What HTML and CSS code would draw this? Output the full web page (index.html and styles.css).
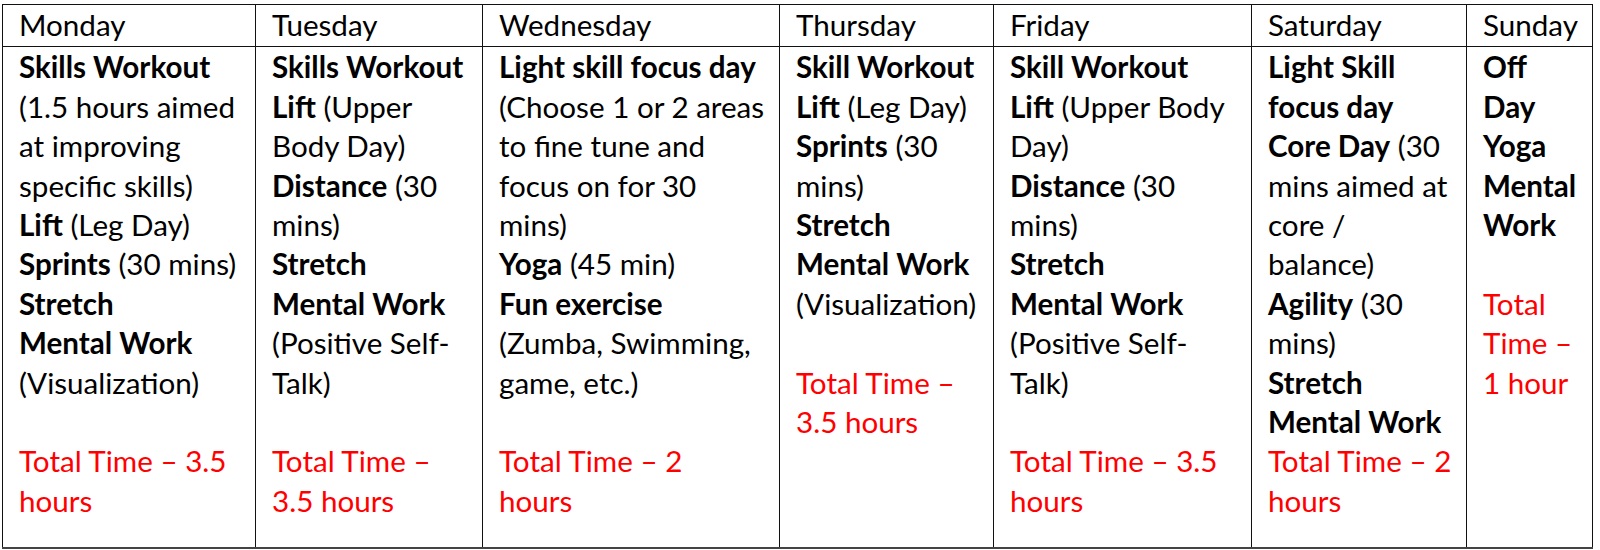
FILE: index.html
```html
<!DOCTYPE html>
<html lang="en">
<head>
<meta charset="utf-8">
<title>Weekly Training Plan</title>
<link rel="stylesheet" href="styles.css">
</head>
<body>
<table class="plan">
  <colgroup>
    <col class="c-mon"><col class="c-tue"><col class="c-wed"><col class="c-thu"><col class="c-fri"><col class="c-sat"><col class="c-sun">
  </colgroup>
  <thead>
    <tr>
      <th>Monday</th><th>Tuesday</th><th class="wed">Wednesday</th><th>Thursday</th><th>Friday</th><th>Saturday</th><th class="sun">Sunday</th>
    </tr>
  </thead>
  <tbody>
    <tr>
      <td>
        <p><b>Skills Workout</b> (1.5 hours aimed at improving specific skills)</p>
        <p><b>Lift</b> (Leg Day)</p>
        <p><b>Sprints</b> (30 mins)</p>
        <p><b>Stretch</b></p>
        <p><b>Mental Work</b> (Visualization)</p>
        <p class="total gap">Total Time – 3.5 hours</p>
      </td>
      <td>
        <p><b>Skills Workout</b></p>
        <p><b>Lift</b> (Upper Body Day)</p>
        <p><b>Distance</b> (30 mins)</p>
        <p><b>Stretch</b></p>
        <p><b>Mental Work</b> (Positive Self-Talk)</p>
        <p class="total gap">Total Time – 3.5 hours</p>
      </td>
      <td class="wed">
        <p><b>Light skill focus day</b> (Choose 1 or 2 areas to fine tune and focus on for 30<br>mins)</p>
        <p><b>Yoga</b> (45 min)</p>
        <p><b>Fun exercise</b> (Zumba, Swimming, game, etc.)</p>
        <p class="total gap">Total Time – 2<br>hours</p>
      </td>
      <td>
        <p><b>Skill Workout</b></p>
        <p><b>Lift</b> (Leg Day)</p>
        <p><b>Sprints</b> (30 mins)</p>
        <p><b>Stretch</b></p>
        <p><b>Mental Work</b> (Visualization)</p>
        <p class="total gap">Total Time – 3.5 hours</p>
      </td>
      <td>
        <p><b>Skill Workout</b></p>
        <p><b>Lift</b> (Upper Body Day)</p>
        <p><b>Distance</b> (30 mins)</p>
        <p><b>Stretch</b></p>
        <p><b>Mental Work</b> (Positive Self-Talk)</p>
        <p class="total gap">Total Time – 3.5 hours</p>
      </td>
      <td>
        <p><b>Light Skill focus day</b></p>
        <p><b>Core Day</b> (30 mins aimed at core / balance)</p>
        <p><b>Agility</b> (30 mins)</p>
        <p><b>Stretch</b></p>
        <p><b>Mental Work</b></p>
        <p class="total">Total Time – 2 hours</p>
      </td>
      <td class="sun">
        <p><b>Off Day</b></p>
        <p><b>Yoga</b></p>
        <p><b>Mental Work</b></p>
        <p class="total gap">Total Time – 1 hour</p>
      </td>
    </tr>
  </tbody>
</table>
</body>
</html>
```
FILE: styles.css
```css
html, body {
  margin: 0;
  padding: 0;
  background: #ffffff;
}

body {
  font-family: Lato, "Liberation Sans", Arial, sans-serif;
  font-size: 29.6px;
  line-height: 39.4px;
  color: #000000;
}

.plan {
  margin: 4px 0 0 2px;
  border-collapse: collapse;
  table-layout: fixed;
  width: 1590px;
  border: 1px solid #222222;
}

.c-mon { width: 253px; }
.c-tue { width: 227px; }
.c-wed { width: 297px; }
.c-thu { width: 214px; }
.c-fri { width: 258px; }
.c-sat { width: 215px; }
.c-sun { width: 126px; }

.plan th,
.plan td {
  border: 1px solid #111111;
  text-align: left;
  vertical-align: top;
  padding: 0 12px 0 16px;
}

.plan .wed {
  padding-right: 6px;
}

.plan .sun {
  padding-right: 14px;
}

.plan th {
  font-weight: 400;
  padding-bottom: 2px;
}

.plan td {
  padding-bottom: 27px;
}

.plan p {
  margin: 0;
}

.plan b {
  font-weight: 700;
}

.total {
  color: #ff0000;
}

.gap {
  margin-top: 39.4px !important;
}

.plan tbody tr:last-child td {
  border-bottom: 2px solid #444444;
}
```
